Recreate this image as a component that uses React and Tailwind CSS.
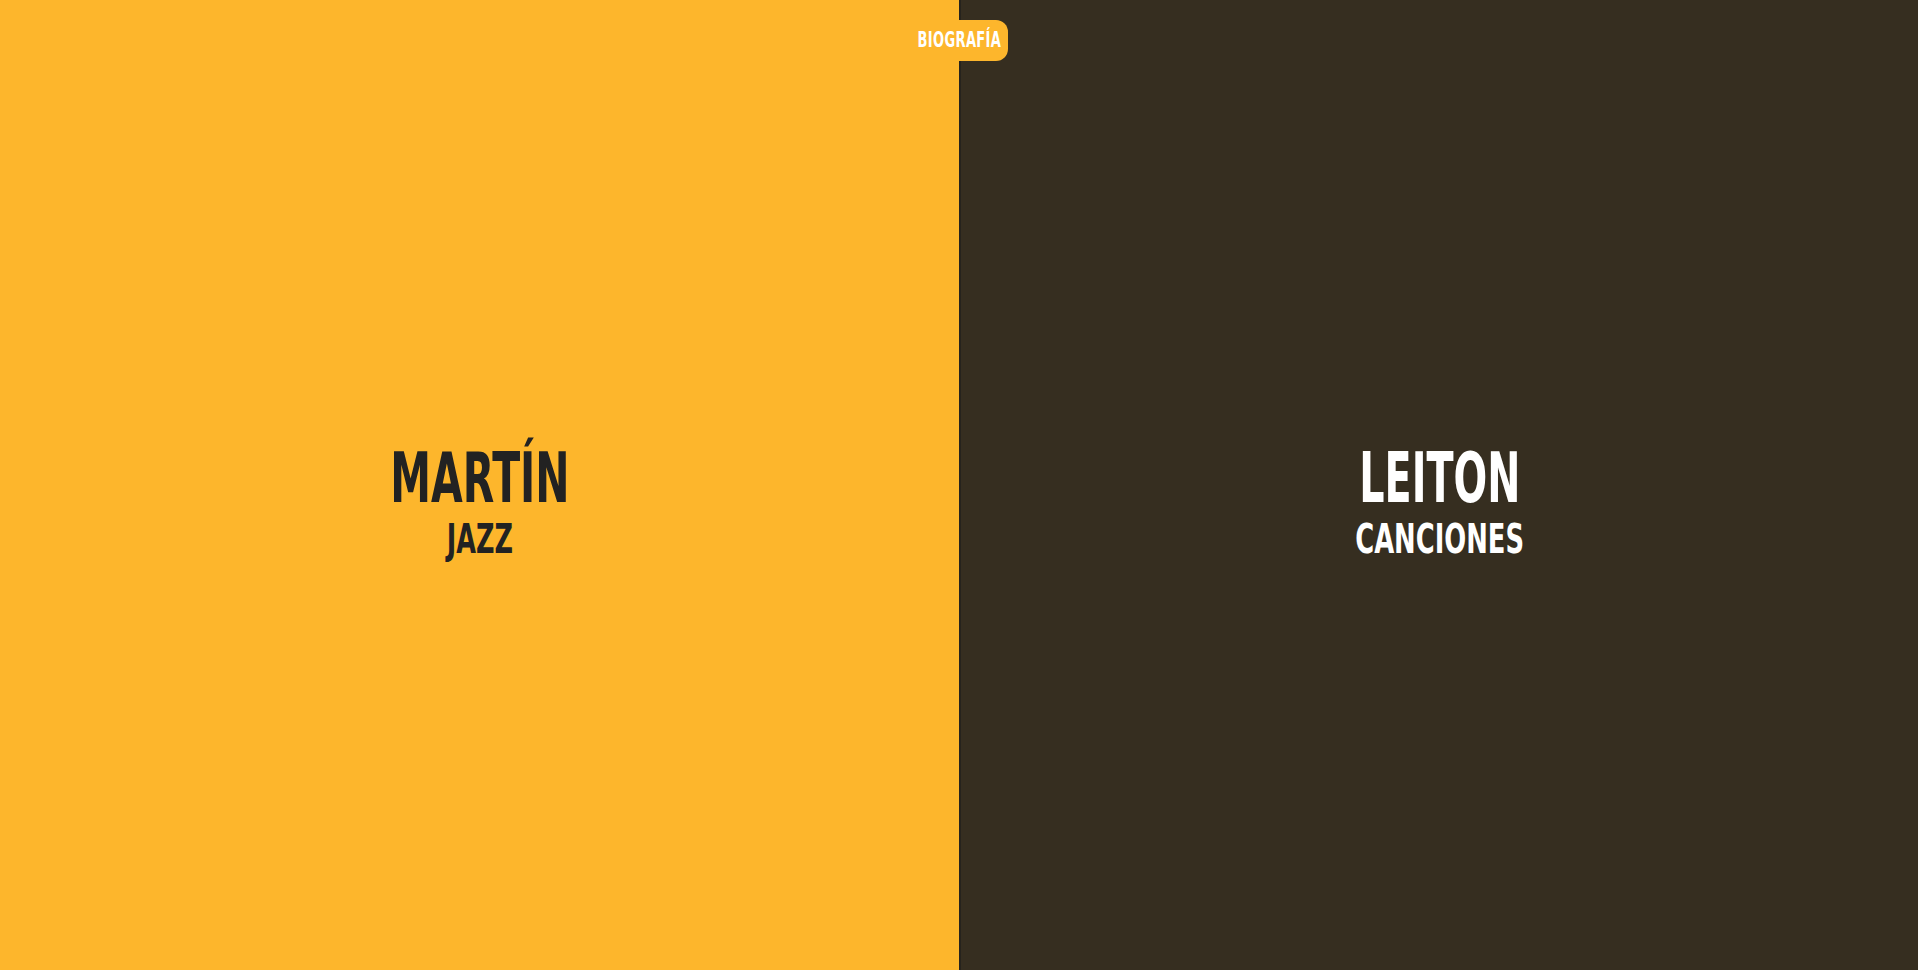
import React from "react";

const condensed = {
  fontFamily: '"DejaVu Sans Condensed", "Liberation Sans", sans-serif',
};

function Half({ title, subtitle, bg, color, titleScale, subScale, className }) {
  return (
    <div className={`h-full flex flex-col items-center justify-center ${bg} ${className}`}>
      <div className="flex flex-col items-center pt-[32px]" style={condensed}>
        <h1 className={`text-[70px] leading-[76px] font-bold uppercase ${color} ${titleScale}`}>
          {title}
        </h1>
        <h2 className={`text-[41px] leading-[46px] font-bold uppercase ${color} ${subScale}`}>
          {subtitle}
        </h2>
      </div>
    </div>
  );
}

export default function App() {
  return (
    <div className="relative w-[1918px] h-[970px] flex overflow-hidden">
      <Half
        title="Martín"
        subtitle="Jazz"
        bg="bg-[#fdb62c]"
        color="text-[#222222]"
        titleScale="scale-x-[0.65]"
        subScale="scale-x-[0.69]"
        className="w-[959px] flex-none"
      />
      <Half
        title="Leiton"
        subtitle="Canciones"
        bg="bg-[#362e20]"
        color="text-white"
        titleScale="scale-x-[0.63]"
        subScale="scale-x-[0.7]"
        className="flex-1 border-l-2 border-[#26231d]"
      />

      {/* badge */}
      <a
        href="#"
        className="absolute top-[20px] left-[909px] h-[41px] w-[99px] rounded-r-xl bg-[#fdb62c] flex items-center justify-end pr-[7px]"
        style={condensed}
      >
        <span className="text-[21px] font-bold text-white uppercase scale-x-[0.69] origin-right tracking-[0.5px]">
          Biografía
        </span>
      </a>
    </div>
  );
}
